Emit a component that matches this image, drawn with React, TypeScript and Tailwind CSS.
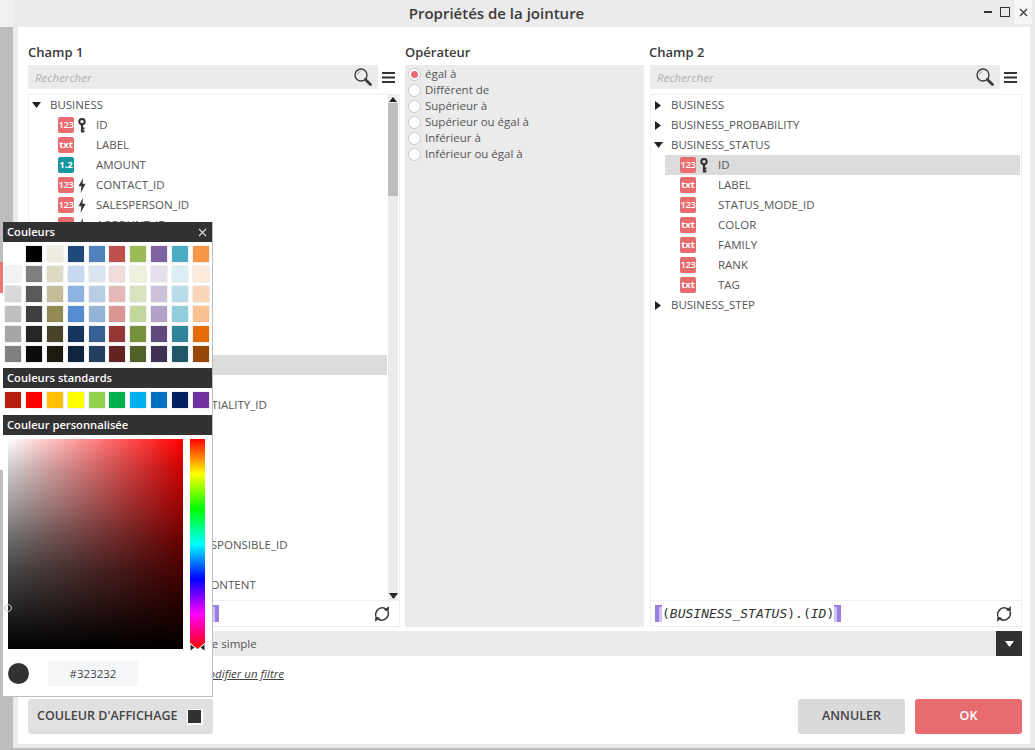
import React from "react";

const FONT = "font-['Open_Sans','Noto_Sans',sans-serif]";

const SearchIcon = () => (
  <svg width="20" height="20" viewBox="0 0 20 20" fill="none">
    <circle cx="8" cy="8" r="6" stroke="#3c3c3c" strokeWidth="1.4" />
    <path d="M4.5 7.5a3.6 3.6 0 0 1 3-3" stroke="#9a9a9a" strokeWidth="1" />
    <path d="M12.4 12.4L17.5 17.5" stroke="#3c3c3c" strokeWidth="2.8" strokeLinecap="round" />
  </svg>
);

const Hamburger = () => (
  <svg width="13" height="11" viewBox="0 0 13 11" fill="none">
    <path d="M0 1h13M0 5.5h13M0 10h13" stroke="#333" strokeWidth="1.8" />
  </svg>
);

const KeyIcon = () => (
  <svg width="8" height="15" viewBox="0 0 8 15" fill="none">
    <circle cx="4" cy="3.6" r="2.7" stroke="#333" strokeWidth="2" />
    <path d="M4 6v8.5M4 10.5h2.4M4 13.4h2.4" stroke="#333" strokeWidth="2.2" />
  </svg>
);

const BoltIcon = () => (
  <svg width="8" height="15" viewBox="0 0 8 15">
    <path d="M5 0L0.5 8.2H3.4L2.6 15L7.6 5.8H4.5L5 0Z" fill="#333" />
  </svg>
);

const RefreshIcon = () => (
  <svg width="18" height="18" viewBox="0 0 18 18" fill="none">
    <path d="M2.8 11.5C1.6 7 5 2.6 9.5 2.8c1.3.1 2.3.5 3.2 1.2" stroke="#3a3a3a" strokeWidth="1.6" />
    <path d="M15.2 6.5C16.4 11 13 15.4 8.5 15.2c-1.3-.1-2.3-.5-3.2-1.2" stroke="#3a3a3a" strokeWidth="1.6" />
    <path d="M16 1.2L15.6 6.8L10.8 5Z" fill="#3a3a3a" />
    <path d="M2 16.8L2.4 11.2L7.2 13Z" fill="#3a3a3a" />
  </svg>
);

const TriDown = ({ color = "#222" }: { color?: string }) => (
  <svg width="9" height="6" viewBox="0 0 9 6">
    <path d="M0 0H9L4.5 6Z" fill={color} />
  </svg>
);

const TriRight = () => (
  <svg width="6" height="9" viewBox="0 0 6 9">
    <path d="M0 0V9L6 4.5Z" fill="#222" />
  </svg>
);

type Kind = "123" | "txt" | "1.2";
type Mark = "key" | "bolt" | undefined;

const Badge = ({ kind }: { kind: Kind }) => (
  <span
    className={`flex h-[16px] w-[16px] shrink-0 items-center justify-center rounded-[2px] leading-none text-white ${
      kind === "1.2" ? "bg-[#17979e]" : "bg-[#e86b70]"
    } ${kind === "123" ? "text-[9.5px] font-semibold tracking-[-0.4px]" : "text-[9.5px] font-bold"}`}
  >
    {kind}
  </span>
);

const FieldRow = ({
  kind,
  mark,
  label,
  selected,
}: {
  kind: Kind;
  mark?: Mark;
  label: string;
  selected?: boolean;
}) => (
  <div className={`ml-[14px] flex h-[20px] items-center pl-[15px] ${selected ? "bg-[#dcdcdc]" : ""}`}>
    <Badge kind={kind} />
    <span className="flex w-[22px] shrink-0 pl-[4px]">
      {mark === "key" && <KeyIcon />}
      {mark === "bolt" && <BoltIcon />}
    </span>
    <span className="whitespace-nowrap">{label}</span>
  </div>
);

const GroupRow = ({ label, open, narrow }: { label: string; open?: boolean; narrow?: boolean }) => (
  <div className="flex h-[20px] items-center">
    <span className={`flex shrink-0 items-center pl-[3px] ${narrow ? "w-[20px]" : "w-[21px]"}`}>
      {open ? <TriDown /> : <span className="pl-[1px]"><TriRight /></span>}
    </span>
    <span>{label}</span>
  </div>
);

const SearchBar = () => (
  <div className="flex h-[24px] items-center">
    <div className="flex h-[24px] flex-1 items-center justify-between bg-[#ebebeb] pr-[5px] pl-[7px]">
      <span className="pt-[1px] text-[#b0b0b0] italic">Rechercher</span>
      <SearchIcon />
    </div>
    <span className="flex w-[22px] justify-end pr-[5px]">
      <Hamburger />
    </span>
  </div>
);

const Bracket = ({ right }: { right?: boolean }) => (
  <span
    className={`inline-block h-[17px] w-[7px] shrink-0 border-t-[2px] border-[#9a7ee2] bg-[#cfc2f2] ${
      right ? "border-r-[4px]" : "border-l-[4px]"
    }`}
  />
);

const Formula = ({ table, field }: { table: string; field: string }) => (
  <div className="flex h-[27px] items-center justify-between border border-[#efefef] pr-[8px] pl-[4px]">
    <span className="flex items-center font-['DejaVu_Sans_Mono',monospace] text-[13px] text-[#333]">
      <Bracket />
      <span className="whitespace-pre">
        (<i>{table}</i>).(<i>{field}</i>)
      </span>
      <Bracket right />
    </span>
    <RefreshIcon />
  </div>
);

const leftRows: { kind: Kind; mark?: Mark; label: string; selected?: boolean }[] = [
  { kind: "123", mark: "key", label: "ID" },
  { kind: "txt", label: "LABEL" },
  { kind: "1.2", label: "AMOUNT" },
  { kind: "123", mark: "bolt", label: "CONTACT_ID" },
  { kind: "123", mark: "bolt", label: "SALESPERSON_ID" },
  { kind: "123", mark: "bolt", label: "ACCOUNT_ID" },
  { kind: "txt", label: "TYPE" },
  { kind: "txt", label: "CODE" },
  { kind: "txt", label: "NAME" },
  { kind: "txt", label: "DATE" },
  { kind: "txt", label: "OWNER" },
  { kind: "123", label: "RANK" },
  { kind: "123", mark: "bolt", label: "STATUS_ID", selected: true },
  { kind: "123", label: "STEP_ID" },
  { kind: "123", mark: "bolt", label: "BUSINESS_CONFIDENTIALITY_ID" },
  { kind: "txt", label: "TAG" },
  { kind: "txt", label: "COLOR" },
  { kind: "txt", label: "FAMILY" },
  { kind: "txt", label: "SOURCE" },
  { kind: "txt", label: "TITLE" },
  { kind: "txt", label: "REF" },
  { kind: "123", mark: "bolt", label: "TEAM_TECHNICAL_RESPONSIBLE_ID" },
  { kind: "txt", label: "NOTE" },
  { kind: "txt", label: "WEB_DESCRIPTION_CONTENT" },
];

const rightRows: { kind: Kind; mark?: Mark; label: string; selected?: boolean }[] = [
  { kind: "123", mark: "key", label: "ID", selected: true },
  { kind: "txt", label: "LABEL" },
  { kind: "123", label: "STATUS_MODE_ID" },
  { kind: "txt", label: "COLOR" },
  { kind: "txt", label: "FAMILY" },
  { kind: "123", label: "RANK" },
  { kind: "txt", label: "TAG" },
];

const ops = ["égal à", "Différent de", "Supérieur à", "Supérieur ou égal à", "Inférieur à", "Inférieur ou égal à"];

const theme = [
  ["#ffffff", "#000000", "#eeece1", "#1f497d", "#4f81bd", "#c0504d", "#9bbb59", "#8064a2", "#4bacc6", "#f79646"],
  ["#f2f2f2", "#7f7f7f", "#ddd9c3", "#c6d9f0", "#dbe5f1", "#f2dcdb", "#ebf1dd", "#e5e0ec", "#dbeef3", "#fdeada"],
  ["#d9d9d9", "#595959", "#c4bd97", "#8db3e2", "#b8cce4", "#e5b9b7", "#d7e3bc", "#ccc1d9", "#b7dde8", "#fbd5b5"],
  ["#bfbfbf", "#3f3f3f", "#938953", "#548dd4", "#95b3d7", "#d99694", "#c3d69b", "#b2a2c7", "#92cddc", "#fac08f"],
  ["#a6a6a6", "#262626", "#494429", "#17365d", "#366092", "#953734", "#76923c", "#5f497a", "#31859b", "#e36c09"],
  ["#808080", "#0c0c0c", "#1d1b10", "#0f243e", "#244061", "#632423", "#4f6128", "#3f3151", "#205867", "#974806"],
];
const standard = ["#b81c0c", "#ff0000", "#ffc000", "#ffff00", "#92d050", "#00b050", "#00b0f0", "#0070c0", "#002060", "#7030a0"];

const Swatch = ({ color }: { color: string }) => (
  <span
    className={`block h-[16px] w-[16px] ${color === "#ffffff" ? "" : "shadow-[0_0_1px_rgba(0,0,0,0.35)]"}`}
    style={{ backgroundColor: color }}
  />
);

const PopHeader = ({ children }: { children: React.ReactNode }) => (
  <div className="flex h-[20px] items-center justify-between bg-[#323232] pr-[5px] pl-[4px] text-[11.2px] font-semibold text-white">
    {children}
  </div>
);

const ColorPopup = () => (
  <div className="absolute top-[222px] left-[3px] w-[210px] border-r border-b border-[#bdbdbd] bg-white">
    <PopHeader>
      <span>Couleurs</span>
      <svg width="9" height="9" viewBox="0 0 9 9" fill="none">
        <path d="M1 1L8 8M8 1L1 8" stroke="#ddd" strokeWidth="1.1" />
      </svg>
    </PopHeader>
    <div className="grid grid-cols-[repeat(10,16px)] justify-between gap-y-[4px] pt-[4px] pr-[3px] pb-[6px] pl-[2px]">
      {theme.flat().map((c, i) => (
        <Swatch key={i} color={c} />
      ))}
    </div>
    <PopHeader>Couleurs standards</PopHeader>
    <div className="grid grid-cols-[repeat(10,16px)] justify-between pt-[4px] pr-[3px] pb-[7px] pl-[2px]">
      {standard.map((c, i) => (
        <Swatch key={i} color={c} />
      ))}
    </div>
    <PopHeader>Couleur personnalisée</PopHeader>
    <div className="flex pt-[4px] pl-[5px]">
      <div className="relative h-[210px] w-[175px] bg-[linear-gradient(to_top,#000_0%,rgba(0,0,0,0.84)_22%,rgba(0,0,0,0.72)_38%,rgba(0,0,0,0.56)_54%,rgba(0,0,0,0.37)_70%,rgba(0,0,0,0.2)_86%,transparent_100%),linear-gradient(to_right,#fff,#f00)]">
        <span className="absolute top-[165px] left-[-4px] h-[8px] w-[8px] rounded-full border border-[#c4c4c4]" />
      </div>
      <div className="relative ml-[7px] h-[212px] w-[15px]">
        <div className="h-[210px] w-[15px] bg-[linear-gradient(to_bottom,#f00,#ff0,#0f0,#0ff,#00f,#f0f,#f00)] [clip-path:polygon(0_0,100%_0,100%_97%,50%_100%,0_97%)]" />
        <svg className="absolute top-[205px] left-0" width="15" height="7" viewBox="0 0 15 7">
          <path d="M0.5 0.5L4.5 3.5L0.5 6.5ZM14.5 0.5L10.5 3.5L14.5 6.5Z" fill="#222" />
        </svg>
      </div>
    </div>
    <div className="flex h-[45px] items-center pl-[5px]">
      <span className="h-[21px] w-[21px] rounded-full bg-[#323232]" />
      <span className="ml-[19px] flex h-[25px] w-[90px] items-center justify-center bg-[#f5f6f8] text-[#444]">
        #323232
      </span>
    </div>
  </div>
);

const Heading = ({ children, shift }: { children: React.ReactNode; shift?: boolean }) => (
  <div className={`flex h-[22px] items-center pb-[2px] text-[13px] font-semibold text-[#3a3a3a] ${shift ? "-ml-[1px]" : ""}`}>
    {children}
  </div>
);

export default function App() {
  return (
    <div className={`relative flex h-[750px] w-[1035px] overflow-hidden bg-[#bdbdbd] ${FONT} text-[11.5px] text-[#555]`}>
      <div className="flex w-[13px] shrink-0 flex-col">
        <div className="h-[27px] bg-[#f0f0f0]" />
        <div className="h-[235px]" />
        <div className="h-[31px] bg-[#e8787c]" />
        <div className="h-[177px] bg-white" />
      </div>

      <div className="flex h-[748px] flex-1 flex-col bg-[#ebebeb]">
        <div className="flex h-[27px] shrink-0 items-start">
          <div className="flex h-[27px] flex-1 items-center justify-center text-[15px] font-semibold text-[#3a3a3a]">
            <span className="mr-[4px]">Propriétés de la jointure</span>
          </div>
          <div className="mr-[3px] flex h-[24px] items-center">
            <span className="mr-[8px] block h-[2px] w-[8px] bg-[#333]" />
            <span className="mr-[4px] block h-[10px] w-[10px] border-[1.5px] border-[#333]" />
            <span className="flex h-[24px] w-[18px] items-center justify-center bg-[#f6f6f6]">
              <svg width="9" height="9" viewBox="0 0 9 9" fill="none">
                <path d="M1 1L8 8M8 1L1 8" stroke="#333" strokeWidth="1.2" />
              </svg>
            </span>
          </div>
        </div>

        <div className="mx-[5px] mb-[4px] flex min-h-0 flex-1 flex-col bg-white pr-[8px] pb-[10px] pl-[10px]">
          <div className="flex h-[600px] shrink-0 gap-x-[5px] pt-[16px]">
            <div className="flex w-[372px] shrink-0 flex-col">
              <Heading>Champ 1</Heading>
              <SearchBar />
              <div className="mt-[5px] flex min-h-0 flex-1 overflow-hidden border border-b-0 border-[#efefef]">
                <div className="min-w-0 flex-1 overflow-hidden">
                  <GroupRow label="BUSINESS" open />
                  {leftRows.map((r) => (
                    <FieldRow key={r.label} {...r} />
                  ))}
                </div>
                <div className="mx-[1px] flex w-[10px] shrink-0 flex-col items-center bg-[#ebebeb]">
                  <svg className="mt-[2px]" width="8" height="5" viewBox="0 0 8 5">
                    <path d="M4 0L8 5H0Z" fill="#222" />
                  </svg>
                  <div className="mt-[1px] h-[93px] w-[10px] bg-[#bdbdbd]" />
                  <div className="flex-1" />
                  <span className="mb-[1px]">
                    <TriDown />
                  </span>
                </div>
              </div>
              <Formula table="BUSINESS" field="STATUS_ID" />
            </div>

            <div className="flex w-[239px] shrink-0 flex-col">
              <Heading>Opérateur</Heading>
              <div className="flex-1 bg-[#ebebeb] pt-[1px] pl-[3px]">
                {ops.map((o, i) => (
                  <div key={o} className="flex h-[16px] items-center">
                    <span className="flex h-[13px] w-[13px] shrink-0 items-center justify-center rounded-full border border-[#c8c8c8] bg-white">
                      {i === 0 && <span className="h-[7px] w-[7px] rounded-full bg-[#e86b70]" />}
                    </span>
                    <span className="ml-[4px]">{o}</span>
                  </div>
                ))}
              </div>
            </div>

            <div className="ml-[1px] flex w-[372px] shrink-0 flex-col">
              <Heading shift>Champ 2</Heading>
              <SearchBar />
              <div className="mt-[5px] min-h-0 flex-1 overflow-hidden border border-b-0 border-[#efefef]">
                <GroupRow label="BUSINESS" narrow />
                <GroupRow label="BUSINESS_PROBABILITY" narrow />
                <GroupRow label="BUSINESS_STATUS" open narrow />
                {rightRows.map((r) => (
                  <div key={r.label} className="mr-[1px]">
                    <FieldRow {...r} />
                  </div>
                ))}
                <GroupRow label="BUSINESS_STEP" narrow />
              </div>
              <Formula table="BUSINESS_STATUS" field="ID" />
            </div>
          </div>

          <div className="mt-[4px] flex h-[25px] shrink-0 items-center bg-[#ebebeb]">
            <span className="flex-1 pt-[1px] pl-[148px]">Jointure simple</span>
            <span className="flex h-[25px] w-[26px] items-center justify-center bg-[#323232]">
              <TriDown color="#fff" />
            </span>
          </div>

          <div className="mt-[9px] flex h-[18px] shrink-0 items-center pl-[115px] text-[#444] italic underline">
            Ajouter ou modifier un filtre
          </div>

          <div className="mt-[16px] flex h-[35px] shrink-0 items-stretch text-[12.5px] font-semibold">
            <button className="flex w-[185px] items-center rounded-[3px] bg-[#e0e0e0] pl-[9px] text-[#444]">
              COULEUR D'AFFICHAGE
              <span className="ml-[9px] flex h-[16px] w-[16px] items-center justify-center bg-white">
                <span className="h-[13px] w-[13px] bg-[#323232]" />
              </span>
            </button>
            <div className="flex-1" />
            <button className="w-[107px] rounded-[3px] bg-[#dadada] text-[#444]">ANNULER</button>
            <button className="ml-[10px] w-[107px] rounded-[3px] bg-[#e86b70] text-white">OK</button>
          </div>
        </div>
      </div>

      <ColorPopup />
    </div>
  );
}
